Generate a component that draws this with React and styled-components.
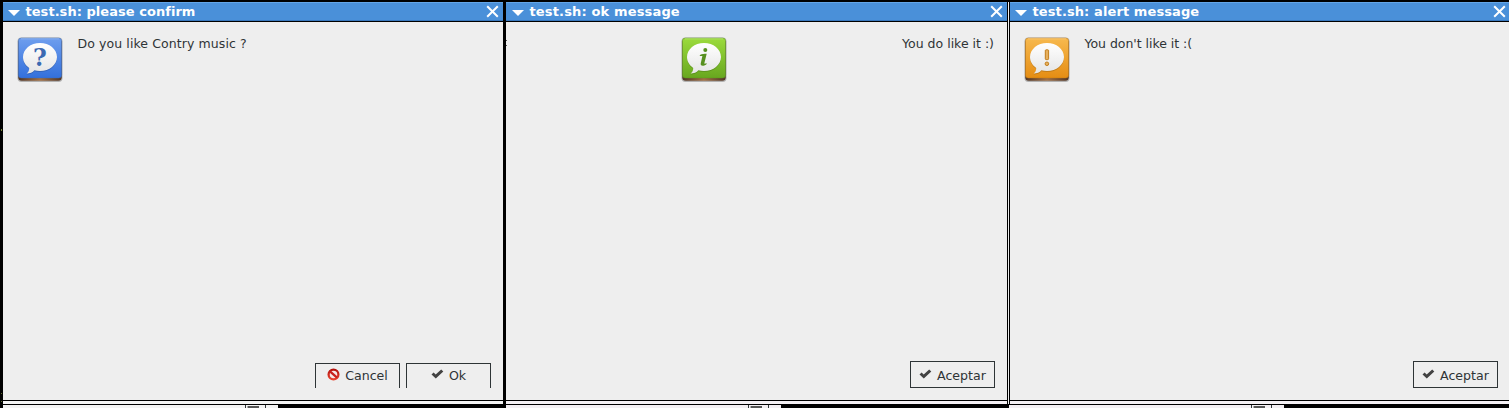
import React from "react";
import styled, { createGlobalStyle } from "styled-components";

const Global = createGlobalStyle`
  body { margin: 0; background: #000; overflow: hidden; }
  * { box-sizing: border-box; }
`;

const Desktop = styled.main`
  display: flex;
  width: 1509px;
  height: 408px;
  padding-top: 2px;
  overflow: hidden;
  background: #000;
  font-family: "DejaVu Sans", sans-serif;
`;

const Edge = styled.div`
  position: relative;
  flex: none;
  width: 3px;
  height: ${(p) => (p.$hollow ? 403 : 406)}px;
  background: #000;
  border: solid #000;
  border-width: 0 1px;
  ${(p) => p.$hollow && "background: #eee; border-bottom-width: 1px;"}
`;

const Speck = styled.i`
  position: absolute;
  left: ${(p) => p.$left}px;
  top: ${(p) => p.$top}px;
  width: 1px;
  height: ${(p) => p.$size || 1}px;
  background: ${(p) => p.$color};
`;

const Window = styled.section`
  flex: none;
  display: flex;
  flex-direction: column;
  width: ${(p) => p.$width}px;
  height: 406px;
`;

const TitleBar = styled.header`
  display: flex;
  align-items: center;
  flex: none;
  height: 20px;
  padding-left: ${(p) => p.$inset}px;
  padding-right: ${(p) => p.$end}px;
  background: #4a90d9;
  border-bottom: 1px solid #000;
  box-shadow: inset 0 1px #64a6e8, inset 0 -1px #3978bd;
  color: #fff;
`;

const Title = styled.h1`
  flex: 1;
  margin: 0 0 0 5.5px;
  font-size: 13px;
  line-height: 18px;
  font-weight: bold;
  white-space: nowrap;
  letter-spacing: ${(p) => p.$spacing}px;
`;

const Body = styled.div`
  display: flex;
  justify-content: ${(p) => (p.$spread ? "space-between" : "flex-start")};
  flex: none;
  height: 339px;
  padding: 14px 13px 0 ${(p) => p.$inset}px;
  background: #eee;
`;

const Message = styled.p`
  margin: 0 0 0 14.5px;
  font-size: 12.5px;
  line-height: 16px;
  color: #2e3436;
  white-space: pre;
  letter-spacing: ${(p) => p.$spacing || 0}px;
`;

const Footer = styled.footer`
  display: flex;
  justify-content: flex-end;
  gap: 6px;
  flex: none;
  height: 39px;
  padding-right: ${(p) => p.$end}px;
  padding-top: ${(p) => (p.$clipped ? 2 : 0)}px;
  background: #eee;
`;

const Button = styled.button`
  display: flex;
  align-items: center;
  justify-content: center;
  gap: 5px;
  width: 85px;
  height: ${(p) => (p.$clipped ? 25 : 27)}px;
  padding: ${(p) => (p.$clipped ? 0 : 2)}px 0 0;
  border: 1px solid #2e3436;
  border-bottom-width: ${(p) => (p.$clipped ? 0 : 1)}px;
  background: #eee;
  color: #2e3436;
  font: 12.6px/16px "DejaVu Sans", sans-serif;
  svg { position: relative; top: -2px; flex: none; }
`;

const Frame = styled.div`
  flex: none;
  height: 5px;
  border: solid #000;
  border-width: 1px 0;
  background: ${(p) => p.$tint};
`;

const Behind = styled.div`
  display: flex;
  justify-content: flex-end;
  flex: none;
  width: ${(p) => p.$width}px;
  height: 3px;
  padding-right: 12px;
  margin-left: ${(p) => p.$shift}px;
  background: ${(p) => p.$tint};
`;

const Chip = styled.div`
  width: 21px;
  height: 3px;
  border: solid #2e3436;
  border-width: 0 1px;
  padding: 1px 0 0 1px;
  &::before {
    content: "";
    display: block;
    width: 11px;
    height: 2px;
    background: #555;
    border-left: 1px solid #aaa;
  }
`;

const palettes = {
  question: ["#6e9eee", "#3370dc", "#3c6ab2"],
  info: ["#9bdb3d", "#68a71f", "#57901f"],
  alert: ["#f7b94e", "#e58d13", "#bd750f"],
};

const bubble =
  "M23 7C13.6 7 6 13.2 6 21C6 25.4 8.4 29.3 12.2 31.9C12.2 34.3 11.4 36 9.6 37.6C12.9 37.6 15.6 36.4 17.4 34.3C19.2 34.8 21 35 23 35C32.4 35 40 28.8 40 21C40 13.2 32.4 7 23 7Z";

function DialogIcon({ kind }) {
  const [top, bottom, ink] = palettes[kind];
  return (
    <svg width="46" height="47" viewBox="0 0 46 47" style={{ flex: "none" }}>
      <defs>
        <linearGradient id={`${kind}-face`} x1="0" y1="0" x2="0" y2="1">
          <stop stopColor={top} />
          <stop offset="1" stopColor={bottom} />
        </linearGradient>
        <linearGradient id={`${kind}-base`}>
          <stop stopColor="#503627" />
          <stop offset=".5" stopColor="#a27045" />
          <stop offset="1" stopColor="#503627" />
        </linearGradient>
        <linearGradient id={`${kind}-bubble`} x1="0" y1="0" x2="0" y2="1">
          <stop stopColor="#fff" />
          <stop offset="1" stopColor="#e5e5e5" />
        </linearGradient>
      </defs>
      <rect x=".5" y="1.5" width="45" height="44.5" rx="4" fill="#000" opacity=".25" />
      <rect x="1.3" y="3" width="43.4" height="41.8" rx="3.5" fill={`url(#${kind}-base)`} />
      <rect x="1.4" y="2" width="43.2" height="40" rx="3" fill={`url(#${kind}-face)`} stroke={ink} strokeOpacity=".6" strokeWidth=".7" />
      <path d="M4 2.8H42" stroke="#fff" opacity=".25" />
      <path d={bubble} transform="translate(0 .9)" fill="#000" opacity=".16" />
      <path d={bubble} fill={`url(#${kind}-bubble)`} />
      {kind === "question" && (
        <text x="23" y="29.6" textAnchor="middle" fontFamily="DejaVu Serif" fontWeight="bold" fontSize="23.5" fill={ink}>
          ?
        </text>
      )}
      {kind === "info" && (
        <g fill={ink}>
          <circle cx="24.3" cy="14" r="2" />
          <path d="M19 18.9C21 18.1 23.3 17.8 25.7 17.8L23.4 26.9C23.2 28 24 27.9 25.7 27L25.3 28.5C22.5 30.3 19.3 30.4 19.7 27.6L21.4 20L18.7 19.9Z" />
        </g>
      )}
      {kind === "alert" && (
        <g fill="#e6b05e" stroke={ink} strokeWidth=".9">
          <rect x="21.3" y="13.8" width="3.3" height="9.8" rx=".8" />
          <circle cx="22.9" cy="27.8" r="1.8" />
        </g>
      )}
    </svg>
  );
}

const Arrow = () => (
  <svg width="12" height="6" viewBox="0 0 12 6" style={{ flex: "none", marginTop: 3 }}>
    <path d="M0 0H12L6 6Z" fill="#fff" />
  </svg>
);

const Close = () => (
  <svg width="13" height="13" viewBox="0 0 13 13" style={{ flex: "none" }}>
    <path d="M1.2 1.2L11.8 11.8M11.8 1.2L1.2 11.8" stroke="#fff" strokeWidth="2" />
  </svg>
);

const Check = () => (
  <svg width="13" height="10" viewBox="0 0 13 10">
    <path d="M.5 5.4L2.6 3.5L4.7 5.4L10.2.4L12.3 2.4L4.8 9.5Z" fill="#424242" />
  </svg>
);

const Forbidden = () => (
  <svg width="13" height="13" viewBox="0 0 13 13">
    <defs>
      <linearGradient id="stop-red" x1="0" y1="0" x2="0" y2="1">
        <stop stopColor="#b3130f" />
        <stop offset="1" stopColor="#e8432f" />
      </linearGradient>
    </defs>
    <circle cx="6.5" cy="6.5" r="4.9" fill="#f6e9e7" stroke="url(#stop-red)" strokeWidth="2.3" />
    <path d="M3 3.3L10 9.7" stroke="#c9211e" strokeWidth="2.3" />
  </svg>
);

function Dialog({ width, kind, title, titleSpacing, message, messageSpacing, inset, titleInset, closeEnd, end, spread, actions, clipped, tint, behind, shift }) {
  return (
    <Window $width={width}>
      <TitleBar $inset={titleInset} $end={closeEnd}>
        <Arrow />
        <Title $spacing={titleSpacing}>{title}</Title>
        <Close />
      </TitleBar>
      <Body $inset={inset} $spread={spread}>
        <DialogIcon kind={kind} />
        <Message $spacing={messageSpacing}>{message}</Message>
      </Body>
      <Footer $end={end} $clipped={clipped}>
        {actions.map(({ label, Icon }) => (
          <Button key={label} $clipped={clipped}>
            <Icon />
            {label}
          </Button>
        ))}
      </Footer>
      <Frame $tint={tint} />
      <Behind $width={behind} $shift={shift} $tint={tint}>
        <Chip />
      </Behind>
    </Window>
  );
}

export default function App() {
  return (
    <>
      <Global />
      <Desktop>
        <Edge>
          <Speck $left={0} $top={127} $size={2} $color="#7c8a3a" />
          <Speck $left={0} $top={391} $color="#5d6a2b" />
          <Speck $left={0} $top={399} $color="#5d6a2b" />
        </Edge>
        <Dialog width={500} kind="question" title="test.sh: please confirm" titleSpacing={0.04} message="Do you like Contry music ?" messageSpacing={0.09} titleInset={5} inset={14} closeEnd={4} end={12} clipped
          actions={[{ label: "Cancel", Icon: Forbidden }, { label: "Ok", Icon: Check }]} tint="#f4f4f4" behind={275} shift={0} />
        <Edge>
          <Speck $left={2} $top={38} $color="#555" />
          <Speck $left={2} $top={43} $color="#555" />
        </Edge>
        <Dialog width={501} kind="info" title="test.sh: ok message" titleSpacing={0.15} message="You do like it :)" messageSpacing={0} titleInset={6} inset={175} closeEnd={4} end={12} spread
          actions={[{ label: "Aceptar", Icon: Check }]} tint="#f4f0f4" behind={275} shift={0} />
        <Edge $hollow />
        <Dialog width={499} kind="alert" title="test.sh: alert message" titleSpacing={0.1} message="You don't like it :(" messageSpacing={-0.03} titleInset={5} inset={14} closeEnd={3} end={11}
          actions={[{ label: "Aceptar", Icon: Check }]} tint="#f4f0f4" behind={275} shift={-1} />
      </Desktop>
    </>
  );
}
